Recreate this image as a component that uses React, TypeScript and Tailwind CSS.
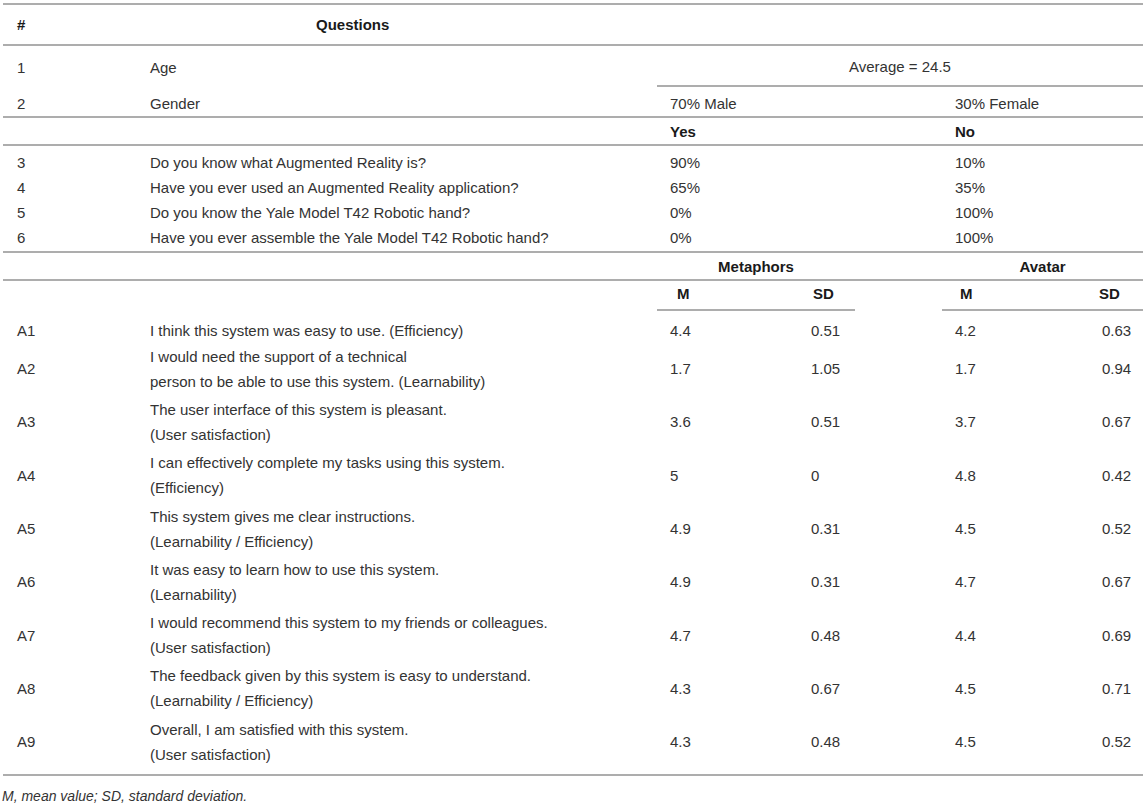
import React from "react";

const upper: [string, string, string, string][] = [
  ["3", "Do you know what Augmented Reality is?", "90%", "10%"],
  ["4", "Have you ever used an Augmented Reality application?", "65%", "35%"],
  ["5", "Do you know the Yale Model T42 Robotic hand?", "0%", "100%"],
  ["6", "Have you ever assemble the Yale Model T42 Robotic hand?", "0%", "100%"],
];

const lower: [string, string[], string, string, string, string][] = [
  ["A2", ["I would need the support of a technical", "person to be able to use this system. (Learnability)"], "1.7", "1.05", "1.7", "0.94"],
  ["A3", ["The user interface of this system is pleasant.", "(User satisfaction)"], "3.6", "0.51", "3.7", "0.67"],
  ["A4", ["I can effectively complete my tasks using this system.", "(Efficiency)"], "5", "0", "4.8", "0.42"],
  ["A5", ["This system gives me clear instructions.", "(Learnability / Efficiency)"], "4.9", "0.31", "4.5", "0.52"],
  ["A6", ["It was easy to learn how to use this system.", "(Learnability)"], "4.9", "0.31", "4.7", "0.67"],
  ["A7", ["I would recommend this system to my friends or colleagues.", "(User satisfaction)"], "4.7", "0.48", "4.4", "0.69"],
  ["A8", ["The feedback given by this system is easy to understand.", "(Learnability / Efficiency)"], "4.3", "0.67", "4.5", "0.71"],
  ["A9", ["Overall, I am satisfied with this system.", "(User satisfaction)"], "4.3", "0.48", "4.5", "0.52"],
];

const UG = "grid grid-cols-[134px_520px_285px_201px]";
const LG = "grid grid-cols-[134px_520px_141px_57px_87px_147px_54px]";

export default function App() {
  return (
    <div
      className="w-[1145px] h-[809px] bg-white text-[#333] text-[15px] leading-[17px] pt-[3px] overflow-hidden"
      style={{ fontFamily: '"Liberation Sans", Arial, Helvetica, sans-serif' }}
    >
      <div className="ml-[3px] w-[1140px] border-t-2 border-[#adadad]">
        {/* header */}
        <div className={`${UG} h-[41px] items-center border-b-2 border-[#adadad] font-bold text-[#1a1a1a]`}>
          <div className="pl-[14px]">#</div>
          <div className="pl-[179px]">Questions</div>
          <div />
          <div />
        </div>
        {/* row 1 */}
        <div className={`${UG} h-[41px]`}>
          <div className="pl-[14px] flex items-center pt-[1px]">1</div>
          <div className="pl-[13px] flex items-center pt-[1px]">Age</div>
          <div className="col-span-2 flex items-center justify-center border-b-2 border-[#adadad] pt-[1px]">
            Average = 24.5
          </div>
        </div>
        {/* row 2 */}
        <div className={`${UG} h-[31px] items-center pt-[4px] border-b-2 border-[#adadad]`}>
          <div className="pl-[14px]">2</div>
          <div className="pl-[13px]">Gender</div>
          <div className="pl-[13px]">70% Male</div>
          <div className="pl-[13px]">30% Female</div>
        </div>
        {/* yes/no */}
        <div className={`${UG} h-[28px] items-center border-b-2 border-[#adadad] font-bold text-[#1a1a1a]`}>
          <div />
          <div />
          <div className="pl-[13px]">Yes</div>
          <div className="pl-[13px]">No</div>
        </div>
        {/* rows 3-6 */}
        <div className="pt-[4px] pb-[1px] border-b-2 border-[#adadad]">
          {upper.map((r) => (
            <div key={r[0]} className={`${UG} h-[25px] items-center`}>
              <div className="pl-[14px]">{r[0]}</div>
              <div className="pl-[13px]">{r[1]}</div>
              <div className="pl-[13px]">{r[2]}</div>
              <div className="pl-[13px]">{r[3]}</div>
            </div>
          ))}
        </div>
        {/* metaphors / avatar */}
        <div className={`${LG} h-[28px] items-center border-b-2 border-[#adadad] font-bold text-[#1a1a1a]`}>
          <div />
          <div />
          <div className="col-span-2 text-center">Metaphors</div>
          <div />
          <div className="col-span-2 text-center">Avatar</div>
        </div>
        {/* M / SD */}
        <div className={`${LG} h-[30px] font-bold text-[#1a1a1a]`}>
          <div />
          <div />
          <div className="col-span-2 grid grid-cols-[141px_57px] items-center pb-[4px] border-b-2 border-[#adadad]">
            <div className="pl-[20px]">M</div>
            <div className="pl-[15px]">SD</div>
          </div>
          <div />
          <div className="col-span-2 grid grid-cols-[147px_54px] items-center pb-[4px] border-b-2 border-[#adadad]">
            <div className="pl-[18px]">M</div>
            <div className="pl-[10px]">SD</div>
          </div>
        </div>
        {/* A1 */}
        <div className={`${LG} h-[31px] items-center pt-[7px]`}>
          <div className="pl-[14px]">A1</div>
          <div className="pl-[13px]">I think this system was easy to use. (Efficiency)</div>
          <div className="pl-[13px]">4.4</div>
          <div className="pl-[13px]">0.51</div>
          <div />
          <div className="pl-[13px]">4.2</div>
          <div className="pl-[13px]">0.63</div>
        </div>
        {/* A2..A9 */}
        <div className="pb-[6px] border-b-2 border-[#adadad]">
          {lower.map((r) => (
            <div key={r[0]} className={`${LG} h-[53.3px] items-center`}>
              <div className="pl-[14px]">{r[0]}</div>
              <div className="pl-[13px] leading-[25px]">
                {r[1].map((l, i) => (
                  <div key={i} className="whitespace-nowrap">{l}</div>
                ))}
              </div>
              <div className="pl-[13px]">{r[2]}</div>
              <div className="pl-[13px]">{r[3]}</div>
              <div />
              <div className="pl-[13px]">{r[4]}</div>
              <div className="pl-[13px] whitespace-nowrap">{r[5]}</div>
            </div>
          ))}
        </div>
      </div>
      <div className="pl-[2px] pt-[10px] text-[14px] leading-[20px] italic text-[#333]">
        M, mean value; SD, standard deviation.
      </div>
    </div>
  );
}
